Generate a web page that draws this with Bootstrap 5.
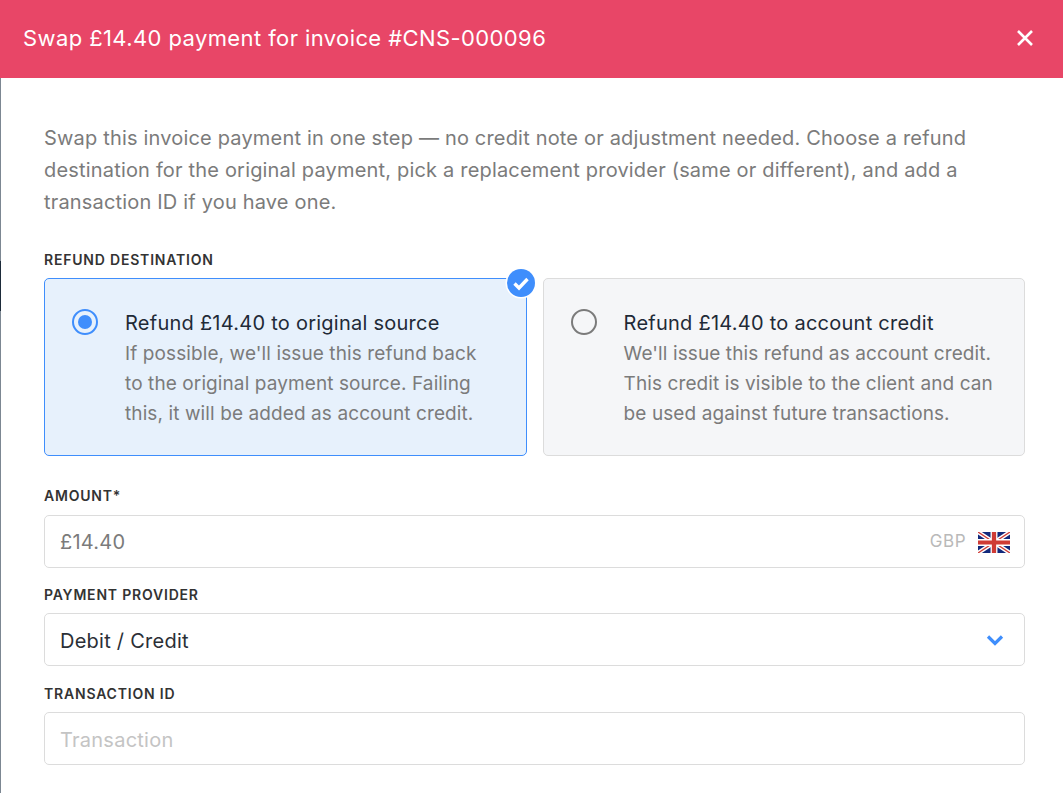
<!DOCTYPE html>
<html lang="en">
<head>
    <meta charset="UTF-8">
    <meta name="viewport" content="width=device-width, initial-scale=1.0">
    <title>Swap payment</title>
    <link href="https://cdn.jsdelivr.net/npm/bootstrap@5.3.0/dist/css/bootstrap.min.css" rel="stylesheet">
    <style>
        html, body {
            height: 793px;
            overflow: hidden;
        }
        body {
            font-family: "Inter", "Liberation Sans", sans-serif;
            background-color: #fff;
            color: #2b2f36;
        }
        .page-edge {
            width: 1px;
            flex: none;
            background: linear-gradient(#1d2b3a 0 46px, #7c8792 46px 261px, #1d2b3a 261px 311px, #7c8792 311px);
        }
        .swap-header {
            height: 78px;
            margin-left: -1px;
            padding: 0 28px 3px 23px;
            background-color: #e84667;
            color: #fff;
        }
        .swap-title {
            font-size: 22px;
            font-weight: 400;
            line-height: 1;
            letter-spacing: .4px;
        }
        .swap-body {
            padding: 44px 38px 0 43px;
        }
        .swap-intro {
            font-size: 20px;
            line-height: 32px;
            letter-spacing: .18px;
            color: #7b7b7b;
            margin-bottom: 33px;
        }
        .field-label {
            display: block;
            font-size: 14px;
            font-weight: 600;
            line-height: 18px;
            letter-spacing: .8px;
            text-transform: uppercase;
            color: #333;
            margin: 18px 0 9px;
        }
        .choice-label {
            margin-top: 0;
        }
        .first-field {
            margin-top: 31px;
            margin-bottom: 10px;
        }
        .last-field {
            margin-top: 19px;
        }
        .choice-box {
            position: relative;
            height: 178px;
            border: 1px solid #dcdcdc;
            border-radius: 5px;
            background-color: #f5f6f8;
            padding: 27px 27px 0 27px;
        }
        .choice-box.picked {
            border-color: #3f8efc;
            background-color: #e7f1fc;
            padding-right: 32px;
        }
        .radio-dot {
            width: 26px;
            height: 26px;
            flex: none;
            margin-top: 3px;
            border: 2px solid #7b7b7b;
            border-radius: 50%;
        }
        .picked .radio-dot {
            border-color: #3f8efc;
            padding: 4px;
        }
        .picked .radio-dot::after {
            content: "";
            display: block;
            width: 14px;
            height: 14px;
            border-radius: 50%;
            background-color: #3f8efc;
        }
        .choice-copy {
            margin-left: 27px;
        }
        .choice-title {
            font-size: 20px;
            line-height: 32px;
            padding-top: 1px;
            letter-spacing: .25px;
            color: #1f2a37;
        }
        .choice-text {
            font-size: 19px;
            line-height: 30px;
            letter-spacing: .1px;
            color: #7b7b7b;
        }
        .check-badge {
            position: absolute;
            top: -12px;
            right: -11px;
        }
        .swap-input {
            height: 53px;
            border: 1px solid #dcdcdc;
            border-radius: 5px;
            padding: 0 15px;
            font-size: 20px;
            letter-spacing: .25px;
            color: #2b2f36;
            background-color: #fff;
        }
        .text-low {
            padding-top: 2px;
        }
        .swap-input::placeholder {
            color: #c4c4c4;
        }
        .swap-input:disabled {
            background-color: #fff;
            color: #7b7b7b;
        }
        .amount-wrap {
            position: relative;
        }
        .amount-suffix {
            position: absolute;
            top: 0;
            right: 15px;
            height: 53px;
            font-size: 17px;
            letter-spacing: .5px;
            color: #b9b9b9;
        }
        .flag-icon {
            margin: 2px 0 0 4px;
        }
        .pick-chevron {
            position: absolute;
            top: 0;
            right: 21px;
            height: 53px;
        }
    </style>
</head>
<body class="d-flex">
<div class="page-edge"></div>
<div class="flex-grow-1">
    <div class="swap-header d-flex align-items-center justify-content-between">
        <h5 class="swap-title m-0">Swap £14.40 payment for invoice #CNS-000096</h5>
        <svg width="20" height="20" viewBox="0 0 20 20" aria-label="Close">
            <path d="M3 3l14 14M17 3L3 17" stroke="#fff" stroke-width="2.600" fill="none"/>
        </svg>
    </div>
    <div class="swap-body">
        <p class="swap-intro">Swap this invoice payment in one step — no credit note or adjustment needed. Choose a refund destination for the original payment, pick a replacement provider (same or different), and add a transaction ID if you have one.</p>

        <span class="field-label choice-label">Refund destination</span>
        <div class="d-flex gap-3">
            <div class="choice-box picked d-flex w-50">
                <div class="radio-dot"></div>
                <div class="choice-copy">
                    <div class="choice-title">Refund £14.40 to original source</div>
                    <div class="choice-text">If possible, we'll issue this refund back to the original payment source. Failing this, it will be added as account credit.</div>
                </div>
                <svg class="check-badge" width="32" height="32" viewBox="0 0 32 32">
                    <circle cx="16" cy="16" r="15.500" fill="#fff"/>
                    <circle cx="16" cy="16" r="14" fill="#3f8efc"/>
                    <path d="M9.500 16.500l4.500 4.500 8.500-9" stroke="#fff" stroke-width="3.400" fill="none"/>
                </svg>
            </div>
            <div class="choice-box d-flex w-50">
                <div class="radio-dot"></div>
                <div class="choice-copy">
                    <div class="choice-title">Refund £14.40 to account credit</div>
                    <div class="choice-text">We'll issue this refund as account credit. This credit is visible to the client and can be used against future transactions.</div>
                </div>
            </div>
        </div>

        <label class="field-label first-field" for="amount">Amount*</label>
        <div class="amount-wrap">
            <input id="amount" class="form-control swap-input" type="text" value="£14.40" disabled>
            <div class="amount-suffix d-flex align-items-center gap-2">
                <span>GBP</span>
                <svg class="flag-icon" width="32" height="21" viewBox="0 0 60 40" preserveAspectRatio="none">
                    <rect width="60" height="40" fill="#12297b"/>
                    <path d="M0 0l60 40M60 0L0 40" stroke="#fff" stroke-width="8"/>
                    <path d="M0 0l60 40M60 0L0 40" stroke="#cf3b35" stroke-width="2.500"/>
                    <path d="M30 0v40M0 20h60" stroke="#fff" stroke-width="13"/>
                    <path d="M30 0v40M0 20h60" stroke="#cf3b35" stroke-width="8"/>
                </svg>
            </div>
        </div>

        <label class="field-label" for="provider">Payment provider</label>
        <div class="amount-wrap">
            <div id="provider" class="form-control swap-input text-low d-flex align-items-center">Debit / Credit</div>
            <div class="pick-chevron d-flex align-items-center">
                <svg width="18" height="12" viewBox="0 0 18 12">
                    <path d="M2 2.500l7 7 7-7" stroke="#3f8efc" stroke-width="3.200" fill="none"/>
                </svg>
            </div>
        </div>

        <label class="field-label last-field" for="txn">Transaction ID</label>
        <input id="txn" class="form-control swap-input text-low" type="text" placeholder="Transaction">
    </div>
</div>
<script src="https://cdn.jsdelivr.net/npm/bootstrap@5.3.0/dist/js/bootstrap.bundle.min.js"></script>
</body>
</html>
